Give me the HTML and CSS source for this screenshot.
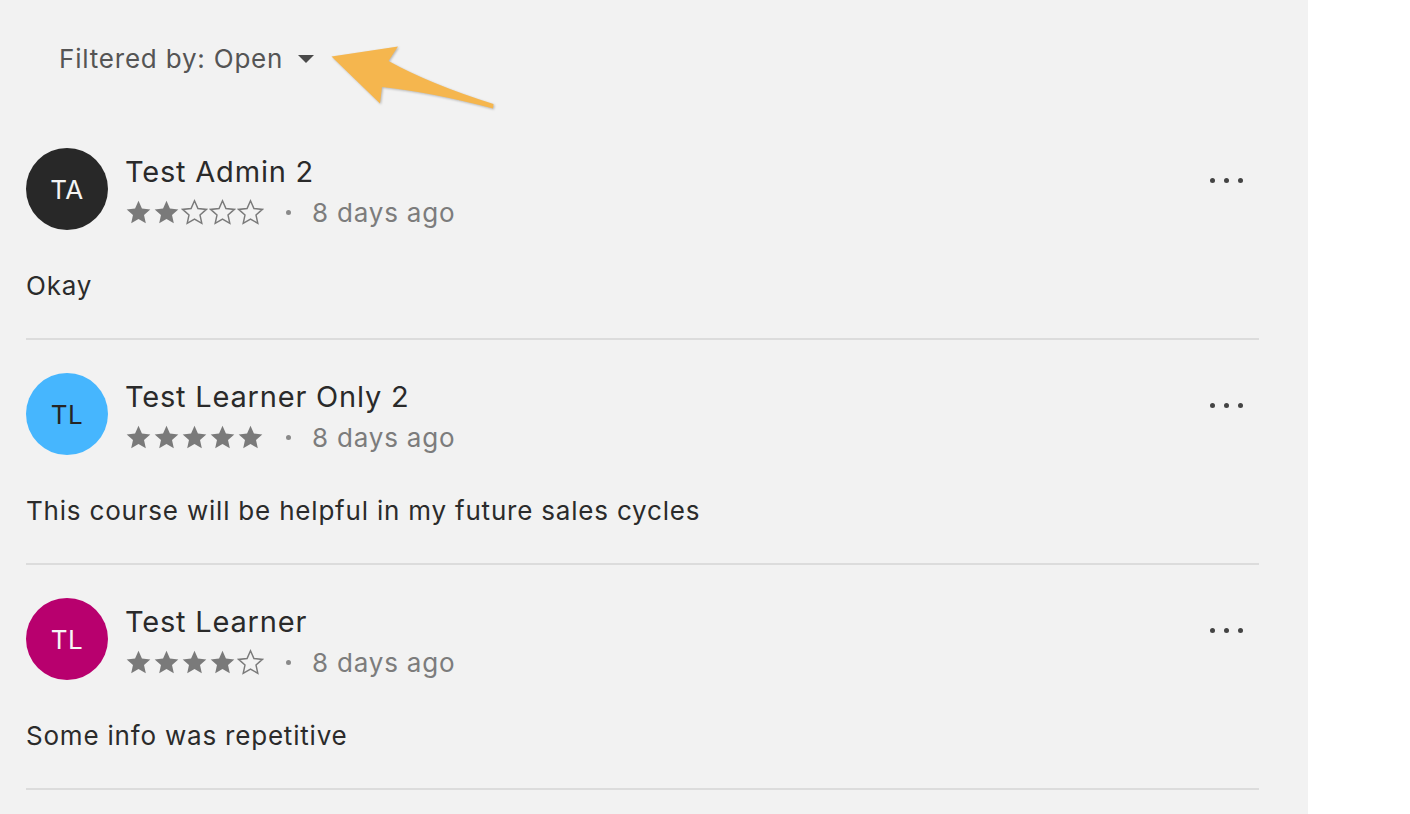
FILE: index.html
```html
<!DOCTYPE html>
<html lang="en">

<head>
    <meta charset="UTF-8" />
    <title>Reviews</title>
    <link rel="stylesheet" href="styles.css">
</head>

<body>
    <svg width="0" height="0" class="defs">
        <defs>
            <path id="star" d="M12 1.6l3.05 6.9 7.45.75-5.6 5 1.6 7.35L12 17.8l-6.5 3.8 1.6-7.35-5.6-5 7.45-.75z" />
        </defs>
    </svg>

    <div class="panel">

        <!-- filter -->
        <div class="filter">
            <span class="filter-label">Filtered by: Open</span>
            <span class="caret"></span>
        </div>

        <svg class="pointer" width="200" height="90" viewBox="320 35 200 90">
            <path d="M331.5 56.5 L398 46.5 L388.5 61 Q430 84 493.5 104 L493 108.5 Q430 92 382 87 L380 103.5 Z" />
        </svg>

        <!-- reviews -->
        <div class="reviews">

            <div class="review">
                <div class="review-head">
                    <div class="avatar avatar-dark">TA</div>
                    <div class="meta">
                        <div class="name">Test Admin 2</div>
                        <div class="rating">
                            <span class="stars">
                                <svg viewBox="0 0 24 24"><use href="#star" class="on" /></svg>
                                <svg viewBox="0 0 24 24"><use href="#star" class="on" /></svg>
                                <svg viewBox="0 0 24 24"><use href="#star" class="off" /></svg>
                                <svg viewBox="0 0 24 24"><use href="#star" class="off" /></svg>
                                <svg viewBox="0 0 24 24"><use href="#star" class="off" /></svg>
                            </span>
                            <span class="sep"></span>
                            <span class="when">8 days ago</span>
                        </div>
                    </div>
                    <div class="more"><i></i><i></i><i></i></div>
                </div>
                <div class="review-text">Okay</div>
            </div>

            <div class="review">
                <div class="review-head">
                    <div class="avatar avatar-blue">TL</div>
                    <div class="meta">
                        <div class="name">Test Learner Only 2</div>
                        <div class="rating">
                            <span class="stars">
                                <svg viewBox="0 0 24 24"><use href="#star" class="on" /></svg>
                                <svg viewBox="0 0 24 24"><use href="#star" class="on" /></svg>
                                <svg viewBox="0 0 24 24"><use href="#star" class="on" /></svg>
                                <svg viewBox="0 0 24 24"><use href="#star" class="on" /></svg>
                                <svg viewBox="0 0 24 24"><use href="#star" class="on" /></svg>
                            </span>
                            <span class="sep"></span>
                            <span class="when">8 days ago</span>
                        </div>
                    </div>
                    <div class="more"><i></i><i></i><i></i></div>
                </div>
                <div class="review-text">This course will be helpful in my future sales cycles</div>
            </div>

            <div class="review">
                <div class="review-head">
                    <div class="avatar avatar-pink">TL</div>
                    <div class="meta">
                        <div class="name">Test Learner</div>
                        <div class="rating">
                            <span class="stars">
                                <svg viewBox="0 0 24 24"><use href="#star" class="on" /></svg>
                                <svg viewBox="0 0 24 24"><use href="#star" class="on" /></svg>
                                <svg viewBox="0 0 24 24"><use href="#star" class="on" /></svg>
                                <svg viewBox="0 0 24 24"><use href="#star" class="on" /></svg>
                                <svg viewBox="0 0 24 24"><use href="#star" class="off" /></svg>
                            </span>
                            <span class="sep"></span>
                            <span class="when">8 days ago</span>
                        </div>
                    </div>
                    <div class="more"><i></i><i></i><i></i></div>
                </div>
                <div class="review-text">Some info was repetitive</div>
            </div>

        </div>
    </div>
</body>

</html>
```

FILE: styles.css
```css
html,
body {
    margin: 0;
    padding: 0;
    background: #ffffff;
    font-family: Inter, "Liberation Sans", sans-serif;
    letter-spacing: 0.8px;
    overflow: hidden;
}

.defs {
    position: absolute;
}

.panel {
    position: relative;
    width: 1308px;
    height: 814px;
    background: #f2f2f2;
    padding-left: 26px;
    box-sizing: border-box;
}

/* filter row */
.filter {
    display: flex;
    align-items: center;
    height: 115px;
    padding: 40px 0 39px 33px;
    box-sizing: border-box;
    color: #555555;
    font-size: 26px;
}

.caret {
    width: 0;
    height: 0;
    margin-left: 15px;
    margin-top: 2px;
    border-left: 8px solid transparent;
    border-right: 8px solid transparent;
    border-top: 8px solid #4a4a4a;
}

.pointer {
    position: absolute;
    left: 320px;
    top: 35px;
    overflow: visible;
}

.pointer path {
    fill: #f5b64e;
    filter: drop-shadow(1px 1px 1px rgba(0, 0, 0, 0.25));
}

/* review list */
.reviews {
    width: 1233px;
}

.review {
    padding: 33px 0 34px 0;
    border-bottom: 2px solid #dcdcdc;
}

.review-head {
    display: flex;
    align-items: flex-start;
}

.avatar {
    width: 82px;
    height: 82px;
    border-radius: 50%;
    flex: none;
    display: flex;
    align-items: center;
    justify-content: center;
    font-size: 26px;
    letter-spacing: 0.5px;
    margin-right: 17px;
}

.avatar-dark {
    background: #282828;
    color: #f4f4f4;
}

.avatar-blue {
    background: #46b6fe;
    color: #252525;
}

.avatar-pink {
    background: #b8006e;
    color: #f6f6f6;
}

.meta {
    flex: 1;
    padding-top: 6px;
}

.name {
    font-size: 29px;
    line-height: 36px;
    color: #2a2a2a;
}

.rating {
    display: flex;
    align-items: center;
    margin-top: 4px;
    height: 36px;
}

.stars {
    display: flex;
    gap: 1px;
}

.stars svg {
    width: 27px;
    height: 27px;
}

.stars .on {
    fill: #7a7a7a;
}

.stars .off {
    fill: none;
    stroke: #7a7a7a;
    stroke-width: 1.3;
}

.sep {
    width: 5px;
    height: 5px;
    border-radius: 50%;
    background: #8a8a8a;
    margin: 0 21px 0 22px;
}

.when {
    font-size: 26px;
    color: #7c7c7c;
}

.more {
    display: flex;
    gap: 9px;
    margin-top: 30px;
    margin-right: 16px;
}

.more i {
    width: 5px;
    height: 5px;
    border-radius: 50%;
    background: #444444;
}

.review-text {
    margin-top: 38px;
    font-size: 26px;
    line-height: 36px;
    color: #2b2b2b;
}
```
